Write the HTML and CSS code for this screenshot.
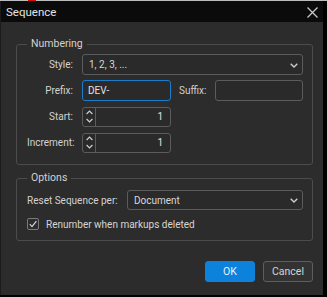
FILE: index.html
```html
<!DOCTYPE html>
<html>
<head>
<meta charset="utf-8">
<link rel="stylesheet" href="styles.css">
</head>
<body>
<div class="topstrip"><span class="redmark"></span></div>
<div class="window">
  <div class="titlebar">
    <span class="title">Sequence</span>
    <svg class="close" width="11" height="11" viewBox="0 0 11 11"><path d="M0.5 0.5 L10.5 10.5 M10.5 0.5 L0.5 10.5" stroke="#c8c8c8" stroke-width="1.3" fill="none"/></svg>
  </div>
  <div class="content">
    <fieldset class="group numbering">
      <legend>Numbering</legend>
      <div class="grid">
        <label class="lbl">Style:</label>
        <div class="select wide"><span>1, 2, 3, ...</span>
          <svg class="chev" width="8" height="5" viewBox="0 0 8 5"><path d="M0.7 0.7 L4 4 L7.3 0.7" stroke="#cfcfcf" stroke-width="1.3" fill="none"/></svg>
        </div>
        <label class="lbl">Prefix:</label>
        <div class="input focus">DEV-</div>
        <label class="lbl suffix">Suffix:</label>
        <div class="input"></div>
        <label class="lbl">Start:</label>
        <div class="spin">
          <div class="spinbtns">
            <svg width="7" height="5" viewBox="0 0 7 5"><path d="M0.6 4 L3.5 1 L6.4 4" stroke="#cfcfcf" stroke-width="1.2" fill="none"/></svg>
            <svg width="7" height="5" viewBox="0 0 7 5"><path d="M0.6 1 L3.5 4 L6.4 1" stroke="#cfcfcf" stroke-width="1.2" fill="none"/></svg>
          </div>
          <span class="val">1</span>
        </div>
        <span></span><span></span>
        <label class="lbl">Increment:</label>
        <div class="spin">
          <div class="spinbtns">
            <svg width="7" height="5" viewBox="0 0 7 5"><path d="M0.6 4 L3.5 1 L6.4 4" stroke="#cfcfcf" stroke-width="1.2" fill="none"/></svg>
            <svg width="7" height="5" viewBox="0 0 7 5"><path d="M0.6 1 L3.5 4 L6.4 1" stroke="#cfcfcf" stroke-width="1.2" fill="none"/></svg>
          </div>
          <span class="val">1</span>
        </div>
      </div>
    </fieldset>
    <fieldset class="group options">
      <legend>Options</legend>
      <div class="optrow">
        <label class="lbl2">Reset Sequence per:</label>
        <div class="select grow"><span>Document</span>
          <svg class="chev" width="8" height="5" viewBox="0 0 8 5"><path d="M0.7 0.7 L4 4 L7.3 0.7" stroke="#cfcfcf" stroke-width="1.3" fill="none"/></svg>
        </div>
      </div>
      <div class="checkrow">
        <span class="checkbox"><svg width="10" height="10" viewBox="0 0 10 10"><path d="M1.8 5.2 L4 7.6 L8.4 2.2" stroke="#d8d8d8" stroke-width="1.2" fill="none"/></svg></span>
        <span>Renumber when markups deleted</span>
      </div>
    </fieldset>
    <div class="buttons">
      <button class="btn ok">OK</button>
      <button class="btn cancel">Cancel</button>
    </div>
  </div>
</div>
</body>
</html>
```
FILE: styles.css
```css
html, body {
  margin: 0;
  padding: 0;
}
body {
  width: 327px;
  height: 297px;
  overflow: hidden;
  background: #000;
  font-family: Roboto, "Liberation Sans", sans-serif;
  font-size: 10px;
  color: #d6d6d6;
}
.topstrip {
  height: 1px;
  background: #bdbdbd;
  position: relative;
}
.redmark {
  position: absolute;
  left: 28px;
  top: 0;
  width: 8px;
  height: 1px;
  background: #d01010;
}
.window {
  width: 322px;
  height: 294px;
  border-left: 1px solid #1c1c1c;
  background: #2c2c2c;
  display: flex;
  flex-direction: column;
}
.titlebar {
  height: 21px;
  background: #0b0b0b;
  display: flex;
  align-items: center;
  justify-content: space-between;
  padding: 0 5px 0 5px;
  flex-shrink: 0;
}
.title {
  font-size: 11.5px;
  color: #e4e4e4;
  padding-top: 1px;
}
.close {
  margin-top: 2px;
}
.content {
  padding: 15px 10px 0 15px;
  display: flex;
  flex-direction: column;
}
.group {
  margin: 0;
  border: 1px solid #4c4c4c;
  border-radius: 3px;
  padding: 3px 9px 8px 10px;
  min-width: 0;
}
.numbering {
  padding-bottom: 11px;
}
.group legend {
  padding: 0 4px;
  font-size: 10.5px;
  line-height: 14px;
  color: #d2d2d2;
}
.grid {
  display: grid;
  grid-template-columns: 46px 89px auto 1fr;
  column-gap: 9px;
  row-gap: 5px;
  grid-auto-rows: 21px;
  align-items: center;
}
.lbl {
  text-align: right;
  color: #d2d2d2;
}
.suffix {
  margin-left: -1px;
}
.select, .input, .spin {
  box-sizing: border-box;
  height: 21px;
  border: 1px solid #5c5c5c;
  border-radius: 3px;
  background: #2a2a2a;
  display: flex;
  align-items: center;
}
.select {
  justify-content: space-between;
  padding: 0 4px 0 6px;
  color: #d8d8d8;
}
.chev {
  margin-top: 1px;
}
.wide {
  grid-column: 2 / 5;
}
.input {
  padding: 0 5px;
  color: #e0e0e0;
}
.focus {
  border-color: #1c7ccc;
}
.spin {
  height: 20px;
  padding: 0;
}
.spinbtns {
  width: 13px;
  height: 100%;
  border-right: 1px solid #5c5c5c;
  display: flex;
  flex-direction: column;
  align-items: center;
  justify-content: space-around;
  padding: 1px 0;
  box-sizing: border-box;
}
.val {
  flex: 1;
  text-align: right;
  padding-right: 7px;
  color: #e0e0e0;
}
.options {
  margin-top: 6px;
  padding-top: 5px;
  padding-bottom: 10px;
}
.optrow {
  display: flex;
  align-items: center;
  height: 20px;
}
.lbl2 {
  color: #d2d2d2;
  width: 100px;
  flex: none;
  white-space: nowrap;
}
.grow {
  flex: 1;
  height: 20px;
}
.checkrow {
  display: flex;
  align-items: center;
  gap: 7px;
  margin-top: 8px;
  height: 12px;
  color: #d6d6d6;
}
.checkbox {
  box-sizing: border-box;
  width: 12px;
  height: 12px;
  border: 1px solid #7a7a7a;
  border-radius: 2px;
  display: flex;
  align-items: center;
  justify-content: center;
}
.buttons {
  display: flex;
  justify-content: flex-end;
  gap: 8px;
  margin-top: 20px;
}
.btn {
  width: 50px;
  height: 21px;
  border-radius: 3px;
  font-family: Roboto, "Liberation Sans", sans-serif;
  font-size: 10.5px;
  padding: 0;
  cursor: default;
}
.ok {
  background: #0c82dc;
  border: 1px solid #0c82dc;
  color: #e8f2fb;
}
.cancel {
  background: #333333;
  border: 1px solid #5e5e5e;
  color: #d4d4d4;
}
```
